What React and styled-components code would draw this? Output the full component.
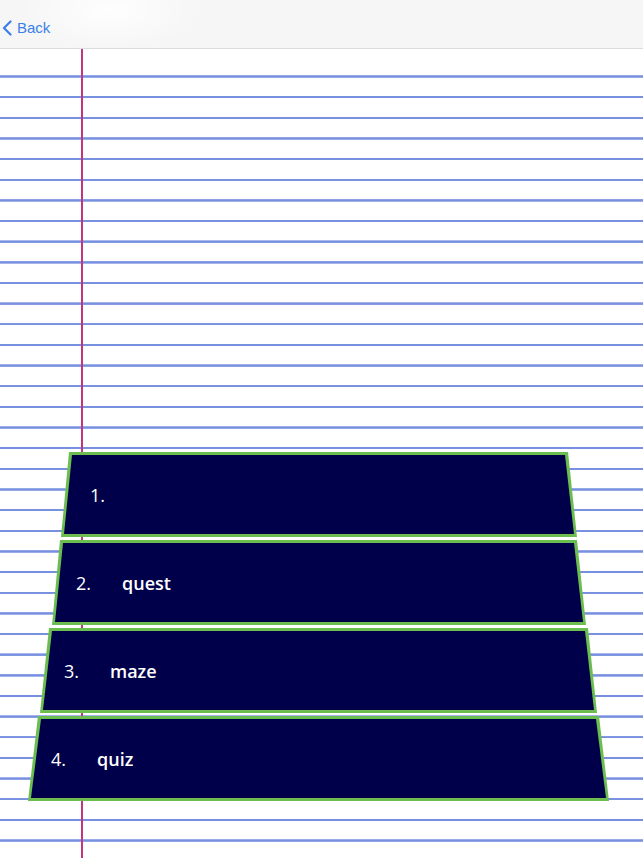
import styled, { createGlobalStyle } from 'styled-components'

const GlobalStyle = createGlobalStyle`
    html, body {
        margin: 0;
        padding: 0;
        background: #ffffff;
    }
    body {
        font-family: "Open Sans", "Noto Sans", sans-serif;
    }
`

const Page = styled.div`
    width: 643px;
    height: 858px;
    display: flex;
    flex-direction: column;
    overflow: hidden;
`

const NavBar = styled.header`
    height: 49px;
    flex: none;
    display: flex;
    align-items: center;
    padding-left: 2px;
    box-sizing: border-box;
    background:
        radial-gradient(ellipse 90px 40px at 110px 10px, rgba(255, 255, 255, 0.9), rgba(255, 255, 255, 0)),
        #f6f6f7;
    border-bottom: 1px solid #dcdcdf;
`

const BackButton = styled.button`
    display: flex;
    align-items: center;
    gap: 5px;
    border: 0;
    background: none;
    padding: 0;
    margin-top: 7px;
    color: #3b7fe8;
    font-family: "Liberation Sans", Arial, sans-serif;
    font-size: 15px;
    cursor: pointer;
`

/* margin line on top, a white cap above the first rule, then the ruled lines */
const Paper = styled.main`
    flex: 1;
    display: flex;
    flex-direction: column;
    padding: 403px 0 0 28px;
    background:
        linear-gradient(to right, transparent 81px, #c3347f 81px, #c3347f 83px, transparent 83px),
        linear-gradient(#ffffff, #ffffff) 0 0 / 100% 20px no-repeat,
        repeating-linear-gradient(
            to bottom,
            transparent 0,
            transparent 5.65px,
            #a9b8ec 5.65px,
            #7890e0 6.15px,
            #7890e0 7.55px,
            #a9b8ec 8.05px,
            transparent 8.05px,
            transparent 20.65px
        ),
        #ffffff;
`

const Stack = styled.ol`
    width: 581px;
    margin: 0;
    padding: 0;
    list-style: none;
    display: flex;
    flex-direction: column;
    gap: 3px;
`

const Band = styled.li`
    height: 85px;
    padding: 3px;
    box-sizing: border-box;
    background: #6cbd50;
    clip-path: polygon(
        ${({ $s }) => `${$s.tl}px 0, ${$s.tr}px 0, ${$s.br}px 100%, ${$s.bl}px 100%`}
    );
`

const Fill = styled.div`
    height: 100%;
    display: flex;
    align-items: center;
    padding-left: ${({ $s }) => $s.pad}px;
    background: #00004a;
    color: #ffffff;
    clip-path: polygon(
        ${({ $s }) => `${$s.tl}px 0, ${$s.tr - 6}px 0, ${$s.br - 6}px 100%, ${$s.bl}px 100%`}
    );
`

const Num = styled.span`
    width: 46px;
    font-size: 18px;
    font-weight: 400;
`

const Label = styled.span`
    font-size: 18px;
    font-weight: 600;
`

const bands = [
    { n: '1.', label: '', tl: 41, tr: 540, bl: 33, br: 549, pad: 59 },
    { n: '2.', label: 'quest', tl: 32, tr: 549, bl: 24, br: 558, pad: 45 },
    { n: '3.', label: 'maze', tl: 21, tr: 560, bl: 12, br: 569, pad: 33 },
    { n: '4.', label: 'quiz', tl: 10, tr: 571, bl: 0, br: 581, pad: 20 },
]

export default function App() {
    return (
        <Page>
            <GlobalStyle />
            <NavBar>
                <BackButton>
                    <svg width="10" height="16" viewBox="0 0 10 16" fill="none">
                        <polyline
                            points="8.5,1.5 2,8 8.5,14.5"
                            stroke="#3b7fe8"
                            strokeWidth="2.2"
                            strokeLinecap="round"
                            strokeLinejoin="round"
                        />
                    </svg>
                    Back
                </BackButton>
            </NavBar>
            <Paper>
                <Stack>
                    {bands.map((b) => (
                        <Band key={b.n} $s={b}>
                            <Fill $s={b}>
                                <Num>{b.n}</Num>
                                <Label>{b.label}</Label>
                            </Fill>
                        </Band>
                    ))}
                </Stack>
            </Paper>
        </Page>
    )
}
